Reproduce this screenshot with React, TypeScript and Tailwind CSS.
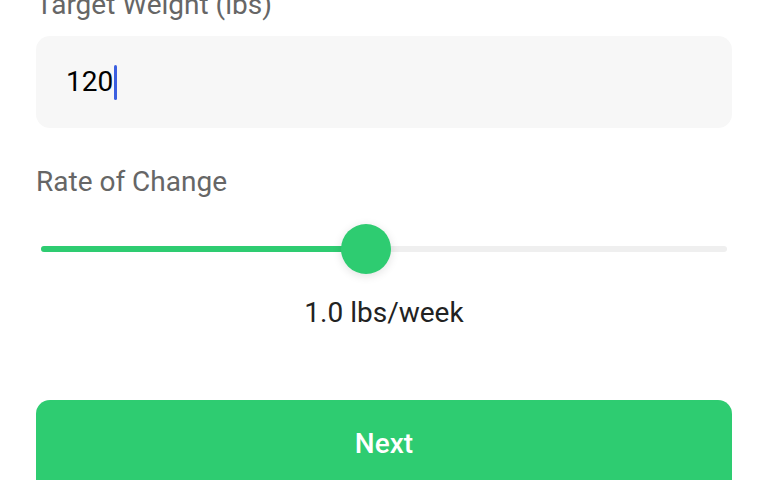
import React from 'react';

export default function App() {
  const pct = 47.4;
  return (
    <div className="w-[768px] h-[480px] overflow-hidden bg-white font-['Roboto',sans-serif]">
      <div className="px-[36px] flex flex-col">
        {/* Target weight */}
        <label className="-mt-[12px] h-[34px] text-[28px] leading-[34px] text-[#666666]">
          Target Weight (lbs)
        </label>
        <div className="mt-[14px] h-[92px] rounded-[14px] bg-[#f7f7f7] flex items-center px-[30px]">
          <span className="text-[28px] text-black">120</span>
          <span className="ml-[1px] w-[3px] h-[35px] rounded-full bg-[#3b5fe0]"></span>
        </div>

        {/* Rate of change */}
        <div className="mt-[37px] h-[34px] text-[28px] leading-[34px] text-[#666666]">
          Rate of Change
        </div>
        <div className="mt-[25px] relative h-[50px] mx-[5px] flex items-center">
          <div className="w-full h-[6px] rounded-full bg-[#efefef]">
            <div className="h-full rounded-full bg-[#2ecc71]" style={{ width: `${pct}%` }}></div>
          </div>
          <div
            className="absolute top-0 w-[50px] h-[50px] -ml-[25px] rounded-full bg-[#2ecc71] shadow-[0_2px_10px_rgba(0,0,0,0.12)]"
            style={{ left: `${pct}%` }}
          ></div>
        </div>
        <div className="mt-[22px] h-[34px] text-center text-[28px] leading-[34px] text-[#222222]">
          1.0 lbs/week
        </div>

        <button className="mt-[70px] h-[100px] shrink-0 rounded-[14px] bg-[#2ecc71] text-white text-[28px] font-medium pb-[12px]">
          Next
        </button>
      </div>
    </div>
  );
}
